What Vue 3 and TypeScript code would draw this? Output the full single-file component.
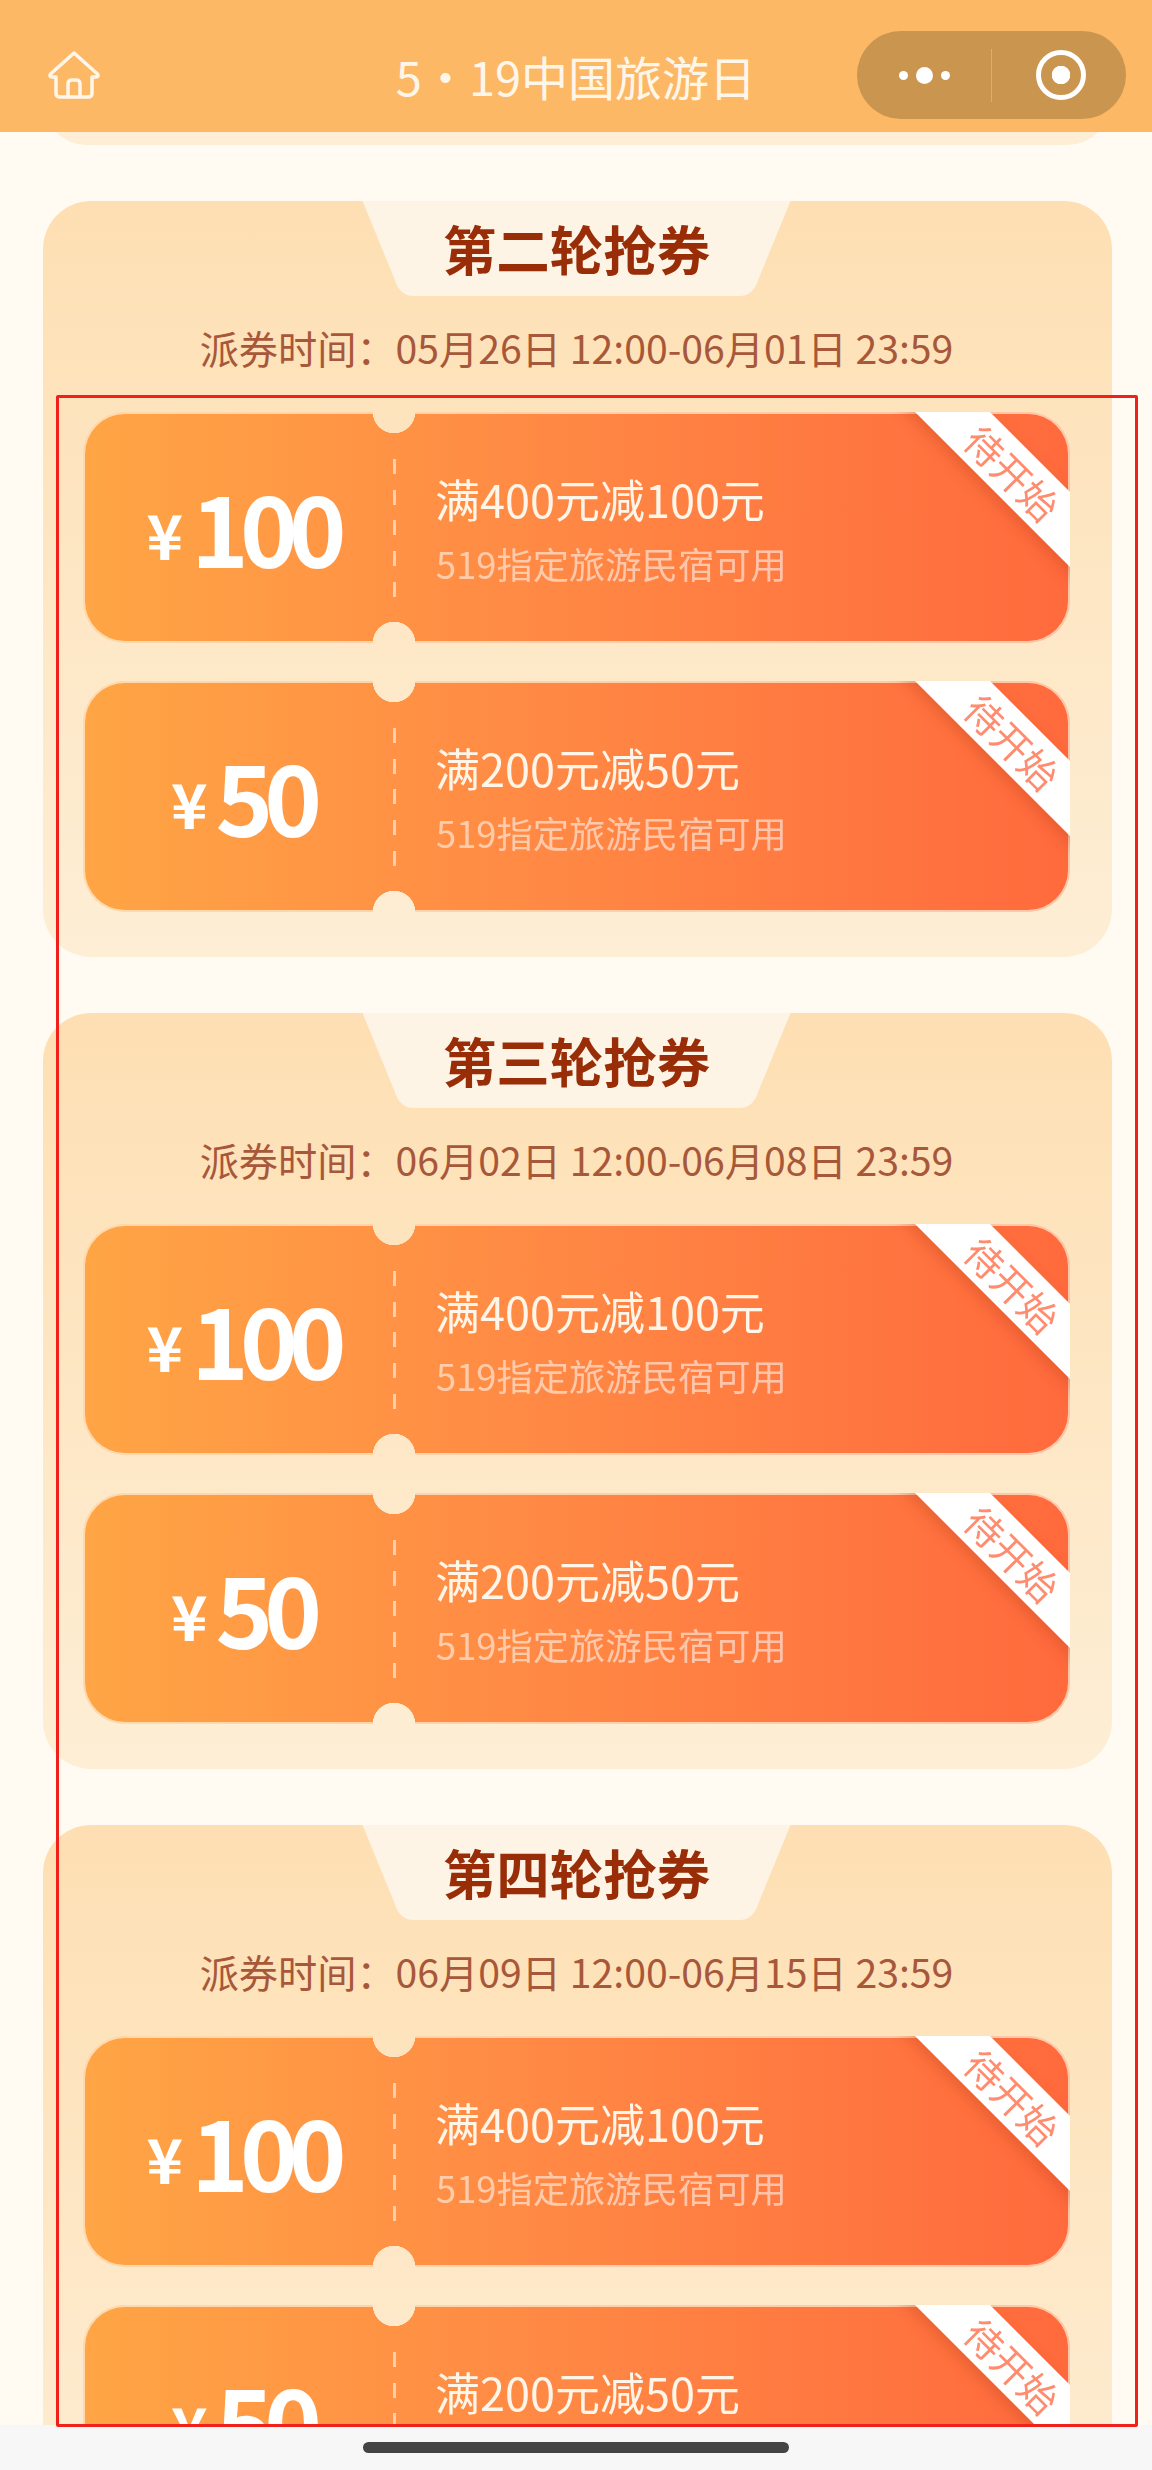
<template>
  <div class="page">
    <header class="nav">
      <div class="nav-left">
        <svg class="home-icon" viewBox="0 0 52 48" fill="none" stroke="currentColor" stroke-width="3.5" stroke-linejoin="round" stroke-linecap="round">
          <path d="M26 2 L2.5 23 Q1 26 4 26 H8 V42 Q8 46 12 46 H40 Q44 46 44 42 V26 H48 Q51 26 49.5 23 Z" />
          <path d="M20 46 V33 Q20 29 24 29 H28 Q32 29 32 33 V46" />
        </svg>
      </div>
      <div class="nav-title">5・19中国旅游日</div>
      <div class="nav-right">
        <div class="capsule">
          <div class="capsule-dots">
            <span class="dot small"></span>
            <span class="dot big"></span>
            <span class="dot small"></span>
          </div>
          <div class="capsule-line"></div>
          <div class="capsule-target"><span></span></div>
        </div>
      </div>
    </header>

    <main class="content">
      <div class="prev-clip"><div class="prev-round"></div></div>

      <section v-for="round in rounds" :key="round.title" class="round">
        <div class="round-tab">{{ round.title }}</div>
        <div class="round-time">派券时间：{{ round.time }}</div>
        <div class="coupons">
          <div v-for="coupon in coupons" :key="coupon.amount" class="coupon">
            <div class="price">
              <span class="yen">¥</span><span class="amount">{{ coupon.amount }}</span>
            </div>
            <div class="dash"></div>
            <div class="info">
              <div class="info-main">{{ coupon.rule }}</div>
              <div class="info-sub">519指定旅游民宿可用</div>
            </div>
            <div class="ribbon">待开始</div>
          </div>
        </div>
      </section>
    </main>

    <footer class="home-bar"><span></span></footer>
    <div class="red-box"></div>
  </div>
</template>

<script setup lang="ts">
interface Round {
  title: string;
  time: string;
}

interface Coupon {
  amount: number;
  rule: string;
}

const rounds: Round[] = [
  { title: '第二轮抢券', time: '05月26日 12:00-06月01日 23:59' },
  { title: '第三轮抢券', time: '06月02日 12:00-06月08日 23:59' },
  { title: '第四轮抢券', time: '06月09日 12:00-06月15日 23:59' }
];

const coupons: Coupon[] = [
  { amount: 100, rule: '满400元减100元' },
  { amount: 50, rule: '满200元减50元' }
];
</script>

<style>
html,
body {
  margin: 0;
  background: #fffbf2;
}
</style>

<style scoped>
.page {
  position: relative;
  display: flex;
  flex-direction: column;
  width: 1152px;
  height: 2470px;
  overflow: hidden;
  background: #fffbf2;
  font-family: "Noto Sans CJK SC", "Noto Sans", sans-serif;
}

.nav {
  flex-shrink: 0;
  display: grid;
  grid-template-columns: 1fr auto 1fr;
  align-items: center;
  height: 132px;
  padding-top: 18px;
  box-sizing: border-box;
  background: #fdb866;
  color: #fff6ea;
}

.nav-left {
  padding-left: 48px;
  display: flex;
}

.home-icon {
  width: 52px;
  height: 48px;
}

.nav-title {
  font-size: 47px;
  line-height: 64px;
  margin-top: 1px;
}

.nav-right {
  display: flex;
  justify-content: flex-end;
  padding-right: 26px;
}

.capsule {
  display: flex;
  align-items: center;
  width: 269px;
  height: 88px;
  border-radius: 44px;
  background: #c9954f;
}

.capsule-dots {
  width: 134px;
  display: flex;
  align-items: center;
  justify-content: center;
  gap: 8px;
}

.dot {
  border-radius: 50%;
  background: #fff;
}

.dot.small {
  width: 9px;
  height: 9px;
}

.dot.big {
  width: 17px;
  height: 17px;
}

.capsule-line {
  width: 1px;
  height: 53px;
  background: rgba(255, 255, 255, 0.25);
}

.capsule-target {
  flex: 1;
  padding-left: 4px;
  display: flex;
  justify-content: center;
}

.capsule-target span {
  display: block;
  width: 50px;
  height: 50px;
  box-sizing: border-box;
  border-radius: 50%;
  border: 5px solid #fff;
  background: radial-gradient(circle, #fff 0 9px, transparent 9.5px);
}

.content {
  flex: 1;
  min-height: 0;
  overflow: hidden;
  display: flex;
  flex-direction: column;
  gap: 56px;
}

.prev-clip {
  flex-shrink: 0;
  height: 13px;
  overflow: hidden;
  display: flex;
  align-items: flex-end;
  padding: 0 41px 0 43px;
}

.prev-round {
  flex: 1;
  height: 100px;
  border-radius: 0 0 44px 44px;
  background: #fdeed5;
}

.round {
  flex-shrink: 0;
  width: 1069px;
  margin-left: 43px;
  height: 756px;
  box-sizing: border-box;
  padding: 0 42px 0 40px;
  border-radius: 48px;
  background: linear-gradient(180deg, #fedfb3 0%, #fdeed5 100%);
}

.round-tab {
  width: 428px;
  height: 95px;
  margin: 0 auto;
  clip-path: path('M0 0H428L396 78Q391 95 377 95H51Q37 95 32 78Z');
  background: #fdf4e5;
  color: #992d07;
  font-size: 53.5px;
  font-weight: 700;
  line-height: 93px;
  text-align: center;
}

.round-time {
  height: 116px;
  color: #a8583a;
  font-size: 39.2px;
  line-height: 102px;
  text-align: center;
}

.coupons {
  display: flex;
  flex-direction: column;
  gap: 38px;
}

.coupon {
  position: relative;
  display: flex;
  align-items: center;
  height: 231px;
  overflow: hidden;
  border-radius: 42px;
  background: linear-gradient(90deg, #ffa545 0%, #ff8744 50%, #ff6a3d 100%);
  box-shadow: inset 0 0 0 2px rgba(255, 240, 215, 0.7);
  -webkit-mask-image:
    radial-gradient(circle at 311px 0, transparent 21px, #000 21.5px),
    radial-gradient(circle at 311px 100%, transparent 21px, #000 21.5px);
  -webkit-mask-composite: source-in;
  mask-image:
    radial-gradient(circle at 311px 0, transparent 21px, #000 21.5px),
    radial-gradient(circle at 311px 100%, transparent 21px, #000 21.5px);
  mask-composite: intersect;
}

.price {
  flex-shrink: 0;
  width: 310px;
  box-sizing: border-box;
  padding-left: 8px;
  padding-bottom: 6px;
  display: flex;
  justify-content: center;
  align-items: center;
  color: #fff;
}

.yen {
  font-size: 62px;
  font-weight: 700;
  line-height: 1;
  margin-right: 8px;
  padding-top: 16px;
}

.amount {
  font-size: 98px;
  font-weight: 700;
  line-height: 1;
  letter-spacing: -9px;
}

.dash {
  flex-shrink: 0;
  width: 3px;
  height: 138px;
  background: repeating-linear-gradient(180deg, rgba(255, 255, 255, 0.55) 0 15px, transparent 15px 30.7px);
}

.info {
  padding-left: 39px;
  padding-top: 7px;
}

.info-main {
  color: #fff5e8;
  font-size: 45px;
  line-height: 64px;
}

.info-sub {
  margin-left: 1px;
  color: rgba(255, 255, 255, 0.55);
  font-size: 36.3px;
  line-height: 64px;
}

.ribbon {
  position: absolute;
  top: 34px;
  left: 785px;
  width: 290px;
  height: 53px;
  transform: rotate(45deg);
  background: #fff;
  box-shadow: 0 6px 14px rgba(190, 70, 30, 0.35);
  color: #ff8c6e;
  font-size: 38px;
  line-height: 53px;
  text-align: center;
}

.home-bar {
  flex-shrink: 0;
  height: 45px;
  display: flex;
  justify-content: center;
  padding-top: 17px;
  box-sizing: border-box;
  background: #f7f7f8;
}

.home-bar span {
  display: block;
  width: 426px;
  height: 11px;
  border-radius: 6px;
  background: #444;
}

.red-box {
  position: absolute;
  left: 56px;
  top: 395px;
  width: 1082px;
  height: 2032px;
  box-sizing: border-box;
  border: 3px solid #f0201a;
  border-radius: 2px;
  pointer-events: none;
}
</style>
